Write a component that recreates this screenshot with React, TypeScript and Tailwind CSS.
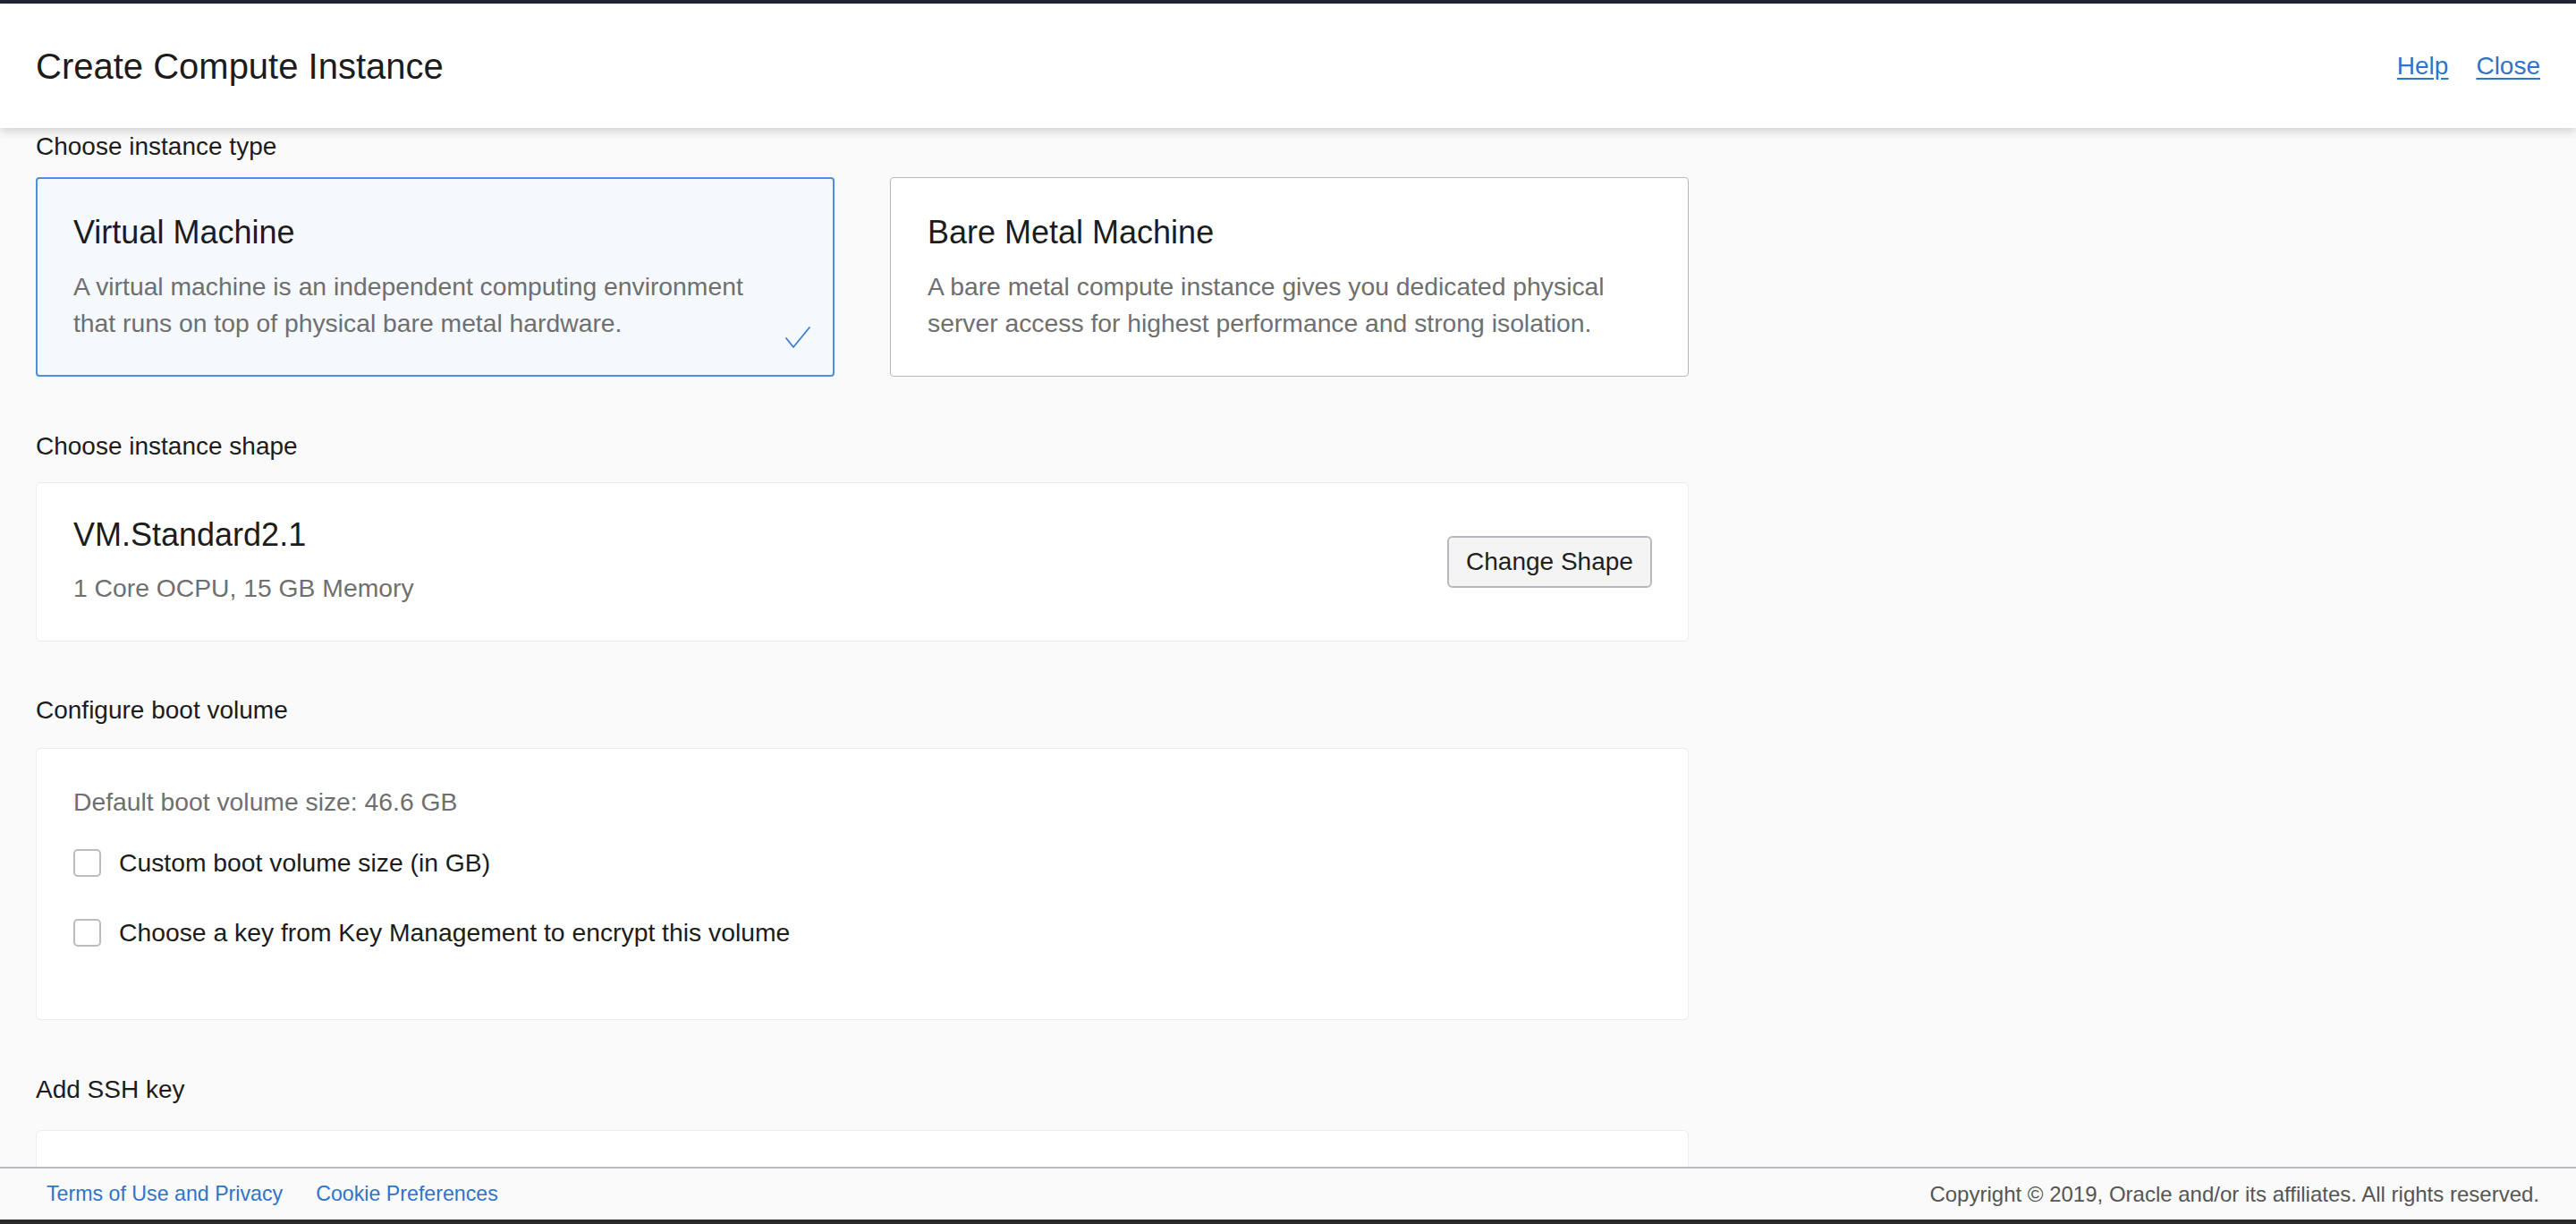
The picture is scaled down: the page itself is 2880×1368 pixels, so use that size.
import React from "react";

const font = "font-['Liberation_Sans','Helvetica_Neue',Arial,sans-serif]";

function SectionLabel({ children, className = "" }: { children: React.ReactNode; className?: string }) {
  return <p className={`text-[28px] leading-[32px] text-[#1c1c1c] ${className}`}>{children}</p>;
}

function TypeCard({
  title,
  lines,
  selected,
}: {
  title: string;
  lines: string[];
  selected?: boolean;
}) {
  return (
    <div
      className={`relative h-[223px] rounded-[4px] ${
        selected
          ? "border-2 border-[#4a90e2] bg-[#f5f8fd] px-[40px] pt-[38px]"
          : "border border-[#b4b8bd] bg-white px-[41px] pt-[39px]"
      }`}
    >
      <h3 className="text-[36px] leading-[44px] text-[#1c1c1c]">{title}</h3>
      <p className="mt-[18px] text-[28.3px] leading-[41px] text-[#6f6f6f]">
        {lines.map((l) => (
          <span key={l} className="block">
            {l}
          </span>
        ))}
      </p>
      {selected && (
        <svg
          className="absolute bottom-[29px] right-[24px]"
          width="30"
          height="26"
          viewBox="0 0 30 26"
          fill="none"
        >
          <path d="M2 14 L10 24 L28 2" stroke="#3b7fd4" strokeWidth="1.8" strokeLinecap="round" strokeLinejoin="round" />
        </svg>
      )}
    </div>
  );
}

function Checkbox({ label }: { label: string }) {
  return (
    <label className="flex h-[44px] items-center gap-[20px]">
      <span className="h-[31px] w-[31px] rounded-[5px] border-2 border-[#b9bcc0] bg-white" />
      <span className="text-[28.3px] leading-[32px] text-[#1c1c1c]">{label}</span>
    </label>
  );
}

export default function App() {
  return (
    <div className={`flex h-[1368px] w-full flex-col bg-[#fafafa] ${font}`}>
      <div className="h-[4px] bg-[#1f2533]" />

      <header className="relative z-10 flex h-[139px] items-center justify-between bg-white px-[40px] shadow-[0_4px_10px_rgba(0,0,0,0.16)]">
        <h1 className="text-[40px] leading-[48px] text-[#1c1c1c]">Create Compute Instance</h1>
        <nav className="flex items-center gap-[31px] text-[28px] text-[#2f74c8]">
          <a href="#" className="underline underline-offset-[4px]">
            Help
          </a>
          <a href="#" className="underline underline-offset-[4px]">
            Close
          </a>
        </nav>
      </header>

      <main className="flex-1 overflow-hidden px-[40px]">
        <div className="w-[1848px]">
          <SectionLabel className="mt-[5px]">Choose instance type</SectionLabel>
          <div className="mt-[18px] grid grid-cols-2 gap-[62px]">
            <TypeCard
              selected
              title="Virtual Machine"
              lines={[
                "A virtual machine is an independent computing environment",
                "that runs on top of physical bare metal hardware.",
              ]}
            />
            <TypeCard
              title="Bare Metal Machine"
              lines={[
                "A bare metal compute instance gives you dedicated physical",
                "server access for highest performance and strong isolation.",
              ]}
            />
          </div>

          <SectionLabel className="mt-[62px]">Choose instance shape</SectionLabel>
          <div className="mt-[24px] flex h-[178px] items-center justify-between rounded-[6px] border border-[#ececec] bg-white pl-[41px] pr-[40px]">
            <div className="pb-[2px]">
              <h3 className="text-[36px] leading-[44px] text-[#1c1c1c]">VM.Standard2.1</h3>
              <p className="mt-[17px] text-[28.3px] leading-[41px] text-[#6f6f6f]">1 Core OCPU, 15 GB Memory</p>
            </div>
            <button
              type="button"
              className="h-[58px] w-[229px] rounded-[6px] border-2 border-[#b5b9bf] bg-[#f4f4f4] text-[28px] text-[#1f1f1f]"
            >
              Change Shape
            </button>
          </div>

          <SectionLabel className="mt-[61px]">Configure boot volume</SectionLabel>
          <div className="mt-[26px] h-[304px] rounded-[6px] border border-[#ececec] bg-white px-[41px] pt-[39px]">
            <p className="text-[28.3px] leading-[41px] text-[#6f6f6f]">Default boot volume size: 46.6 GB</p>
            <div className="mt-[25px] flex flex-col gap-[34px]">
              <Checkbox label="Custom boot volume size (in GB)" />
              <Checkbox label="Choose a key from Key Management to encrypt this volume" />
            </div>
          </div>

          <SectionLabel className="mt-[62px]">Add SSH key</SectionLabel>
          <div className="mt-[29px] h-[300px] rounded-[6px] border border-[#ececec] bg-white" />
        </div>
      </main>

      <footer className="flex h-[59px] items-center justify-between border-t-2 border-[#b8bcc0] bg-[#fafafa] pl-[52px] pr-[41px]">
        <div className="flex items-center gap-[37px] text-[23.2px] text-[#2f74c8]">
          <a href="#">Terms of Use and Privacy</a>
          <a href="#">Cookie Preferences</a>
        </div>
        <p className="text-[24px] text-[#555555]">Copyright © 2019, Oracle and/or its affiliates. All rights reserved.</p>
      </footer>
      <div className="h-[5px] bg-[#2b2b2b]" />
    </div>
  );
}
